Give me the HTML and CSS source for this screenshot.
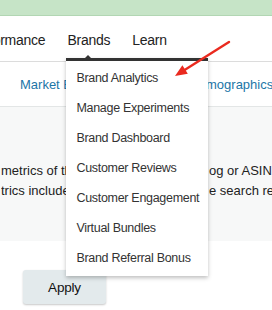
FILE: index.html
```html
<!DOCTYPE html>
<html lang="en">
<head>
  <meta charset="UTF-8" />
  <title>Seller Central · Brands</title>
  <link rel="stylesheet" href="styles.css">
</head>
<body>
  <div class="page">
    <!-- Top banner -->
    <div class="topbar"></div>

    <!-- Main nav -->
    <nav class="nav">
      <a class="nav-item first" href="#">Performance</a>
      <div class="nav-item brands">
        <a href="#">Brands</a>
        <ul class="dropdown">
          <li><a href="#">Brand Analytics</a></li>
          <li><a href="#">Manage Experiments</a></li>
          <li><a href="#">Brand Dashboard</a></li>
          <li><a href="#">Customer Reviews</a></li>
          <li><a href="#">Customer Engagement</a></li>
          <li><a href="#">Virtual Bundles</a></li>
          <li><a href="#">Brand Referral Bonus</a></li>
        </ul>
      </div>
      <a class="nav-item" href="#">Learn</a>
    </nav>

    <!-- Sub nav -->
    <div class="subnav">
      <a href="#">Market Basket Analysis</a>
      <a href="#">Demographics</a>
    </div>

    <!-- Description -->
    <section class="content">
      <div class="line"><span class="cut">metrics of the search terms for catal</span>og or ASIN</div>
      <div class="line"><span class="cut">trics include clicks and orders in th</span>e search results</div>
    </section>

    <button class="btn">Apply</button>

    <!-- annotation -->
    <svg class="annot" width="272" height="310" viewBox="0 0 272 310">
      <line x1="229" y1="42" x2="183" y2="71" stroke="#ea2a1f" stroke-width="2.4" stroke-linecap="round"/>
      <polygon points="175,76 182.4,65.3 187.8,73.7" fill="#ea2a1f"/>
    </svg>
  </div>
</body>
</html>
```

FILE: styles.css
```css
:root{
  --green:#c6e4c7;
  --link:#1c76a7;
  --ink:#222;
}
*{box-sizing:border-box;margin:0;padding:0}
body{
  font-family:'Liberation Sans',Arial,sans-serif;
  background:#fff;
  color:var(--ink);
  overflow:hidden;
}
a{color:inherit;text-decoration:none}
.page{position:relative;width:272px;height:310px;overflow:hidden}

/* ── Top banner ───────────────────────── */
.topbar{height:16px;background:var(--green);border-bottom:1px solid #b2d6b3}

/* ── Main nav ─────────────────────────── */
.nav{
  height:46px;
  display:flex;
  align-items:flex-start;
  gap:22px;
  padding-top:16px;
  border-bottom:1px solid #dcdcdc;
  font-size:14px;
  letter-spacing:-.25px;
  line-height:16px;
  white-space:nowrap;
}
.nav-item.first{margin-left:-32px}
.brands{position:relative}

.dropdown{
  position:absolute;
  left:-1px;top:26px;
  width:142px;
  list-style:none;
  background:#fff;
  border-top:3px solid #333;
  padding:2px 0 3px;
  box-shadow:0 2px 4px rgba(0,0,0,.25);
  z-index:5;
  font-size:12.5px;
  letter-spacing:-.3px;
  line-height:30px;
  color:#333;
}
.dropdown::before{
  content:"";
  position:absolute;
  left:16px;bottom:100%;
  border:6px solid transparent;
  border-top:0;
  border-bottom-color:#333;
}
.dropdown a{display:block;padding:0 10px}

/* ── Sub nav ──────────────────────────── */
.subnav{
  height:45px;
  display:flex;
  gap:35px;
  padding:15px 0 0 20px;
  border-bottom:1px solid #e3e6e6;
  font-size:13px;
  line-height:16px;
  color:var(--link);
  white-space:nowrap;
}

/* ── Content ──────────────────────────── */
.content{
  height:134px;
  background:#f7f8f8;
  padding:54px 0 0 1px;
  font-size:13px;
  line-height:20px;
  white-space:nowrap;
}
.cut{display:inline-block;width:208px;overflow:hidden;vertical-align:top}

.btn{
  display:block;
  margin:29px 0 0 23px;
  width:83px;height:34px;
  border:none;
  border-radius:3px;
  background:#e3eaec;
  box-shadow:0 1px 2px rgba(0,0,0,.22);
  font-family:inherit;
  font-size:13.5px;
  letter-spacing:-.2px;
  color:#111;
}

.annot{position:absolute;left:0;top:0;pointer-events:none;z-index:10}
```
